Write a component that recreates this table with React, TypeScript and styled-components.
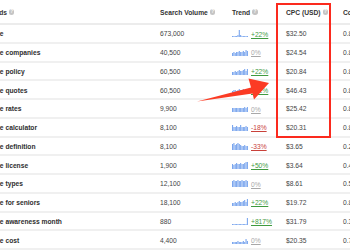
import React from 'react';
import styled, { createGlobalStyle } from 'styled-components';

type Tone = 'up' | 'flat' | 'down';

interface Linha {
  palavra: string;
  volume: string;
  barras: number[];
  variacao: string;
  tom: Tone;
  cpc: string;
  comp: string;
}

const linhas: Linha[] = [
  { palavra: 'insurance', volume: '673,000', barras: [1, 1, 1, 1, 2, 7, 2, 1, 1, 1, 1, 1], variacao: '+22%', tom: 'up', cpc: '$32.50', comp: '0.81' },
  { palavra: 'insurance companies', volume: '40,500', barras: [3, 4, 3, 4, 4, 5, 4, 4, 5, 4, 6, 5], variacao: '0%', tom: 'flat', cpc: '$24.54', comp: '0.84' },
  { palavra: 'insurance policy', volume: '60,500', barras: [3, 3, 4, 3, 4, 5, 4, 4, 5, 6, 4, 6], variacao: '+22%', tom: 'up', cpc: '$20.84', comp: '0.83' },
  { palavra: 'insurance quotes', volume: '60,500', barras: [3, 4, 4, 3, 4, 5, 4, 4, 5, 4, 5, 4], variacao: '+22%', tom: 'up', cpc: '$46.43', comp: '0.89' },
  { palavra: 'insurance rates', volume: '9,900', barras: [4, 4, 4, 4, 4, 4, 4, 4, 4, 5, 4, 5], variacao: '0%', tom: 'flat', cpc: '$25.42', comp: '0.86' },
  { palavra: 'insurance calculator', volume: '8,100', barras: [6, 4, 4, 5, 4, 4, 6, 4, 4, 4, 5, 4], variacao: '-18%', tom: 'down', cpc: '$20.31', comp: '0.85' },
  { palavra: 'insurance definition', volume: '8,100', barras: [6, 7, 5, 6, 7, 6, 5, 4, 4, 5, 4, 4], variacao: '-33%', tom: 'down', cpc: '$3.65', comp: '0.21' },
  { palavra: 'insurance license', volume: '1,900', barras: [5, 4, 5, 6, 5, 5, 6, 5, 5, 6, 7, 7], variacao: '+50%', tom: 'up', cpc: '$3.64', comp: '0.43' },
  { palavra: 'insurance types', volume: '12,100', barras: [6, 7, 6, 6, 7, 6, 6, 7, 6, 6, 7, 6], variacao: '0%', tom: 'flat', cpc: '$8.61', comp: '0.52' },
  { palavra: 'insurance for seniors', volume: '18,100', barras: [3, 3, 4, 3, 4, 5, 4, 4, 5, 6, 4, 7], variacao: '+22%', tom: 'up', cpc: '$19.72', comp: '0.83' },
  { palavra: 'insurance awareness month', volume: '880', barras: [1, 1, 1, 1, 1, 1, 1, 1, 1, 1, 1, 7], variacao: '+817%', tom: 'up', cpc: '$31.79', comp: '0.32' },
  { palavra: 'insurance cost', volume: '4,400', barras: [2, 2, 2, 2, 3, 2, 2, 2, 3, 2, 5, 3], variacao: '0%', tom: 'flat', cpc: '$20.35', comp: '0.74' },
];

const Estilo = createGlobalStyle`
  html, body {
    margin: 0;
    padding: 0;
    background: #ffffff;
    overflow: hidden;
  }
  body {
    font-family: "Liberation Sans", Arial, sans-serif;
  }
`;

const Sparkline: React.FC<{ barras: number[] }> = ({ barras }) => (
  <svg width="16" height="8" viewBox="0 0 16 8">
    {barras.map((h, i) => (
      <rect key={i} x={i * 1.35} y={8 - h} width={1.1} height={h} fill="#7ba6ee" />
    ))}
  </svg>
);

const Info = () => <InfoIcon>?</InfoIcon>;

const App: React.FC = () => {
  return (
    <Pagina>
      <Estilo />
      <Tabela>
        <Cabecalho>
          <Titulo recuo={3}>Keywords <Info /></Titulo>
          <Titulo>Search Volume <Info /></Titulo>
          <Titulo>Trend <Info /></Titulo>
          <Titulo>CPC (USD) <Info /></Titulo>
          <Titulo>Competition <Info /></Titulo>
        </Cabecalho>
        {linhas.map((l) => (
          <Linha key={l.palavra}>
            <Palavra>{l.palavra}</Palavra>
            <Numero>{l.volume}</Numero>
            <TrendCell>
              <Sparkline barras={l.barras} />
              <Variacao tom={l.tom}>{l.variacao}</Variacao>
            </TrendCell>
            <Numero>{l.cpc}</Numero>
            <Numero>{l.comp}</Numero>
          </Linha>
        ))}
      </Tabela>
      <Destaque />
      <Seta width="350" height="250" viewBox="0 0 350 250">
        <polygon points="197,101.5 251,87.5 248.5,78.5 269,83 254,99.5 252.5,93.5" fill="#fb3b24" />
      </Seta>
    </Pagina>
  );
};

export default App;

const Pagina = styled.div`
  position: relative;
  width: 350px;
  height: 250px;
  overflow: hidden;
`;

const Tabela = styled.div`
  display: flex;
  flex-direction: column;
  margin-left: -28px;
`;

const colunas = `188px 72px 54px 57px 60px`;

const Cabecalho = styled.div`
  display: grid;
  grid-template-columns: ${colunas};
  align-items: center;
  height: 25px;
  box-sizing: border-box;
  border-bottom: 2px solid #ececec;
  padding-top: 1px;
`;

const Titulo = styled.div<{ recuo?: number }>`
  display: flex;
  align-items: center;
  gap: 2px;
  padding-left: ${(p) => p.recuo ?? 0}px;
  font-size: 6.7px;
  font-weight: bold;
  color: #333333;
  white-space: nowrap;
`;

const InfoIcon = styled.span`
  display: inline-flex;
  align-items: center;
  justify-content: center;
  width: 5.5px;
  height: 5.5px;
  border-radius: 50%;
  background: #c4c4c4;
  color: #ffffff;
  font-size: 4.5px;
  font-weight: bold;
  line-height: 1;
`;

const Linha = styled.div`
  display: grid;
  grid-template-columns: ${colunas};
  align-items: center;
  height: 18.75px;
  box-sizing: border-box;
  border-bottom: 2px solid #f0f0f0;
  padding-top: 1px;
`;

const Palavra = styled.div`
  font-size: 6.7px;
  font-weight: bold;
  color: #2e2e2e;
  white-space: nowrap;
`;

const Numero = styled.div`
  font-size: 6.7px;
  color: #444444;
  white-space: nowrap;
`;

const TrendCell = styled.div`
  display: flex;
  align-items: flex-end;
  gap: 3px;
  svg {
    margin-bottom: 1px;
  }
`;

const coresTom: Record<Tone, string> = {
  up: '#3f9a3f',
  flat: '#a8a8a8',
  down: '#c9413a',
};

const Variacao = styled.span<{ tom: Tone }>`
  font-size: 6.7px;
  color: ${(p) => coresTom[p.tom]};
  text-decoration: underline;
  line-height: 1;
`;

const Destaque = styled.div`
  position: absolute;
  left: 276px;
  top: 3px;
  width: 55px;
  height: 135px;
  box-sizing: border-box;
  border: 2.5px solid #fb2a1e;
`;

const Seta = styled.svg`
  position: absolute;
  left: 0;
  top: 0;
  pointer-events: none;
`;
